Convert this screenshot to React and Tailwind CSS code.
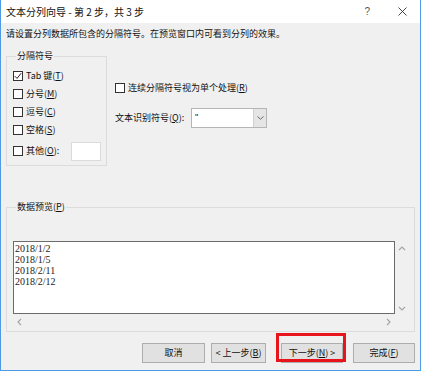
import React from "react";

function Check({ checked }) {
  return (
    <span className="w-[10px] h-[10px] border border-[#333] bg-white flex items-center justify-center shrink-0">
      {checked && (
        <svg width="8" height="8" viewBox="0 0 8 8">
          <path d="M0.8 4.2 L3 6.4 L7.2 1.2" fill="none" stroke="#222" strokeWidth="1" />
        </svg>
      )}
    </span>
  );
}

function Chevron({ dir }) {
  const d = {
    up: "M1 4 L4 1 L7 4",
    down: "M1 1 L4 4 L7 1",
    left: "M4 1 L1 4 L4 7",
    right: "M1 1 L4 4 L1 7",
  }[dir];
  const vertical = dir === "up" || dir === "down";
  return (
    <svg width={vertical ? 8 : 5} height={vertical ? 5 : 8} viewBox={vertical ? "0 0 8 5" : "0 0 5 8"}>
      <path d={d} fill="none" stroke="#a6a6a6" strokeWidth="1.2" />
    </svg>
  );
}

function Btn({ children, className = "" }) {
  return (
    <div className={"h-[20px] flex items-center justify-center bg-[#e1e1e1] border border-[#adadad] " + className}>
      {children}
    </div>
  );
}

export default function App() {
  const rows = [
    ["Tab 键(", "T", ")", true],
    ["分号(", "M", ")", false],
    ["逗号(", "C", ")", false],
    ["空格(", "S", ")", false],
  ];
  const data = ["2018/1/2", "2018/1/5", "2018/2/11", "2018/2/12"];

  return (
    <div className="relative w-[421px] h-[371px] bg-[#f0f0f0] border-x border-b border-[#4d9be6] text-[9px] leading-[12px] text-[#111] font-['Noto_Sans_CJK_SC',sans-serif] overflow-hidden flex flex-col">
      {/* title bar */}
      <div className="h-[23px] bg-white flex items-center pl-[5px] pr-[13px] shrink-0">
        <span className="text-[10px]">文本分列向导 - 第 2 步，共 3 步</span>
        <span className="ml-auto text-[10px] text-[#555] font-['Liberation_Sans',sans-serif]">?</span>
        <svg className="ml-[28px]" width="9" height="9" viewBox="0 0 9 9">
          <path d="M0.5 0.5 L8.5 8.5 M8.5 0.5 L0.5 8.5" stroke="#333" strokeWidth="0.9" />
        </svg>
      </div>

      <div className="px-[5px] flex flex-col">
        <div className="mt-[5px]">请设置分列数据所包含的分隔符号。在预览窗口内可看到分列的效果。</div>

        <div className="flex mt-[10px]">
          <fieldset className="w-[101px] border border-[#dcdcdc] pl-[6px] pt-[5px] pb-[4px]">
            <legend className="ml-[3px] px-[1px]">分隔符号</legend>
            {rows.map(([a, k, b, c]) => (
              <div key={k} className="h-[18px] flex items-center gap-[3px]">
                <Check checked={c} />
                <span>
                  {a}
                  <span className="underline">{k}</span>
                  {b}
                </span>
              </div>
            ))}
            <div className="h-[20px] mt-[2px] flex items-center gap-[3px]">
              <Check />
              <span>
                其他(<span className="underline">O</span>):
              </span>
              <div className="ml-[9px] w-[30px] h-[19px] bg-white border border-[#dadada]" />
            </div>
          </fieldset>

          <div className="ml-[8px] flex flex-col">
            <div className="mt-[32px] flex items-center gap-[3px]">
              <Check />
              <span>
                连续分隔符号视为单个处理(<span className="underline">R</span>)
              </span>
            </div>
            <div className="mt-[14px] flex items-center">
              <span className="w-[76px]">
                文本识别符号(<span className="underline">Q</span>):
              </span>
              <div className="w-[76px] h-[20px] bg-white border border-[#b5b5b5] flex">
                <span className="flex-1 pl-[3px] leading-[16px] font-['Liberation_Sans',sans-serif]">"</span>
                <div className="w-[13px] h-full bg-[#e5e5e5] border-l border-[#d0d0d0] flex items-center justify-center">
                  <svg width="7" height="4" viewBox="0 0 7 4">
                    <path d="M0.5 0.5 L3.5 3.2 L6.5 0.5" fill="none" stroke="#666" strokeWidth="1" />
                  </svg>
                </div>
              </div>
            </div>
          </div>
        </div>

        <fieldset className="mt-[35px] border border-[#dcdcdc] pl-[6px] pt-[28px] pb-[2px]">
          <legend className="ml-[3px] px-[1px]">数据预览(<span className="underline">P</span>)</legend>
          <div className="flex">
            <div className="w-[382px] h-[73px] bg-white border border-[#6b6b6b] pt-[1px] pl-[1px] font-['Liberation_Serif',serif] text-[10px] leading-[11px] text-[#222]">
              {data.map((d) => (
                <div key={d}>{d}</div>
              ))}
            </div>
            <div className="w-[13px] flex flex-col items-center justify-between pt-[5px] pb-[3px]">
              <Chevron dir="up" />
              <Chevron dir="down" />
            </div>
          </div>
          <div className="w-[382px] h-[15px] flex items-center justify-between px-[4px]">
            <Chevron dir="left" />
            <Chevron dir="right" />
          </div>
        </fieldset>

        <div className="mt-[11px] flex justify-end">
          <Btn className="w-[63px]">取消</Btn>
          <Btn className="ml-[6px] w-[55px]">&lt; 上一步(<span className="underline">B</span>)</Btn>
          <Btn className="ml-[15px] w-[62px] border-[#0078d7]">
            下一步(<span className="underline">N</span>) &gt;
          </Btn>
          <Btn className="ml-[10px] w-[62px]">完成(<span className="underline">F</span>)</Btn>
        </div>
      </div>

      {/* annotation box */}
      <div className="absolute left-[275px] top-[333px] w-[70px] h-[29px] border-[3px] border-[#e8141c]" />
    </div>
  );
}
